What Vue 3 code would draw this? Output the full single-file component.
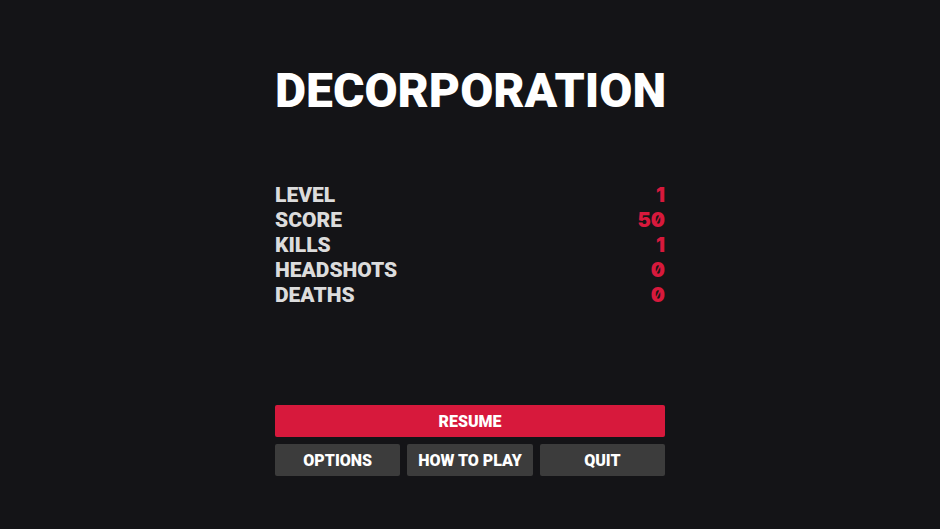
<template>
  <main class="menu">
    <h1 class="title">DECORPORATION</h1>

    <dl class="stats">
      <div v-for="stat in stats" :key="stat.label" class="stat">
        <dt>{{ stat.label }}</dt>
        <dd>{{ stat.value }}</dd>
      </div>
    </dl>

    <div class="actions">
      <button type="button" class="btn primary">RESUME</button>
      <button v-for="action in actions" :key="action" type="button" class="btn">{{ action }}</button>
    </div>
  </main>
</template>

<script setup>
const stats = [
  { label: 'LEVEL', value: 1 },
  { label: 'SCORE', value: 50 },
  { label: 'KILLS', value: 1 },
  { label: 'HEADSHOTS', value: 0 },
  { label: 'DEATHS', value: 0 }
];

const actions = ['OPTIONS', 'HOW TO PLAY', 'QUIT'];
</script>

<style>
body { margin: 0; background: #141417; }
</style>

<style scoped>
.menu {
  display: flex; flex-direction: column;
  box-sizing: border-box;
  min-height: 100vh;
  max-width: 390px;
  margin: 0 auto;
  padding: 61px 0 53px;
  font-family: Roboto, "Liberation Sans", sans-serif;
  font-weight: 900;
}
.title {
  margin: 0;
  color: #fff;
  font-size: 48px; font-weight: 900; line-height: 60px;
}
.stats { margin: 62px 0; }
.stat {
  display: flex; justify-content: space-between;
  font-size: 21px; line-height: 25px;
}
dt { color: #dcdcdc; }
dd {
  margin: 0;
  color: #d7193c;
  font-family: Inter, Roboto, sans-serif;
  font-size: 20px;
  font-feature-settings: "zero";
}
.actions {
  display: grid; grid-template-columns: repeat(3, 1fr);
  gap: 7px;
  margin-top: auto;
}
.btn {
  height: 32px;
  padding: 0;
  border: 0; border-radius: 2px;
  background: #3c3c3c;
  color: #fff;
  font: inherit; font-size: 16px;
  cursor: pointer;
}
.primary { grid-column: 1 / -1; background: #d7193c; }
</style>
